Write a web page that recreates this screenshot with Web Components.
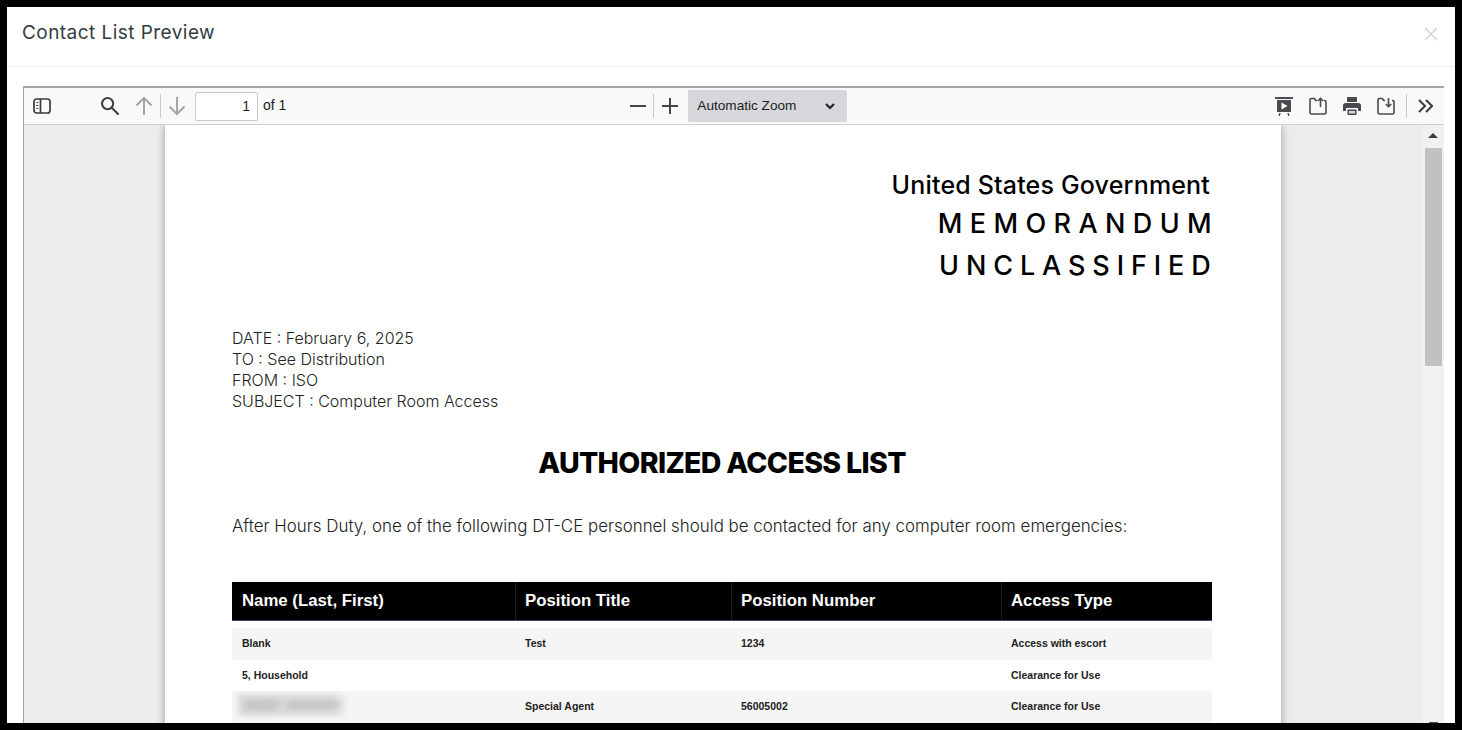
<!DOCTYPE html>
<html>
<head>
<meta charset="utf-8">
<title>Contact List Preview</title>
<style>
  html, body { margin: 0; height: 100%; background: #000; overflow: hidden; }
  body { padding: 7px; box-sizing: border-box; height: 730px; }
</style>
</head>
<body>
<modal-dialog heading="Contact List Preview">
  <pdf-viewer>
    <memo-page></memo-page>
  </pdf-viewer>
</modal-dialog>

<script>
class ModalDialog extends HTMLElement {
  constructor() {
    super();
    this.attachShadow({ mode: 'open' });
  }

  connectedCallback() {
    this.shadowRoot.innerHTML = `
      <style>
        :host {
          display: flex;
          flex-direction: column;
          height: 716px;
          background: #fff;
          overflow: hidden;
          font-family: Inter, "Liberation Sans", sans-serif;
        }
        header {
          flex: none;
          display: flex;
          align-items: center;
          justify-content: space-between;
          height: 59px;
          padding: 0 17px 0 15px;
          border-bottom: 1px solid #eeeef4;
        }
        h1 {
          margin: 0 0 8px;
          font-size: 19px;
          font-weight: 400;
          letter-spacing: 0.45px;
          color: #333d3f;
        }
        .close { display: block; margin-bottom: 6px; }
        .body {
          flex: 1;
          min-height: 0;
          padding: 19px 11px 0 16px;
        }
      </style>
      <header>
        <h1>${this.getAttribute('heading')}</h1>
        <svg class="close" width="14" height="14" viewBox="0 0 14 14" fill="none" stroke="#d4d4d4" stroke-width="1.7"><path d="M1 1l12 12M13 1L1 13"/></svg>
      </header>
      <div class="body"><slot></slot></div>
    `;
  }
}

class PdfToolbar extends HTMLElement {
  constructor() {
    super();
    this.attachShadow({ mode: 'open' });
  }

  connectedCallback() {
    this.shadowRoot.innerHTML = `
      <style>
        :host {
          display: flex;
          align-items: center;
          flex: none;
          height: 36px;
          background: #f9f9fa;
          border-bottom: 1px solid #cfcfd2;
          font: 14px "Liberation Sans", Arial, sans-serif;
          color: #1c1b22;
        }
        svg { display: block; flex: none; }
        .sep { width: 1px; height: 24px; background: #c8c8ca; flex: none; }
        .page {
          box-sizing: border-box;
          width: 63px;
          height: 29px;
          margin-left: 9px;
          padding: 0 7px;
          border: 1px solid #c9c9cc;
          border-radius: 2px;
          background: #fff;
          line-height: 26px;
          text-align: right;
        }
        .of { margin-left: 5px; margin-top: -2px; }
        .zoom {
          display: flex;
          align-items: center;
          justify-content: space-between;
          box-sizing: border-box;
          width: 159px;
          height: 32px;
          margin-left: 10px;
          padding: 0 12px 0 9px;
          background: #d7d7db;
          border-radius: 2px;
          font-size: 13.6px;
        }
        .zoom span { margin-top: -2px; }
      </style>
      <svg style="margin-left:9px" width="18" height="16" viewBox="0 0 18 16" fill="none" stroke="#3a3a3f" stroke-width="1.7"><rect x="1" y="1" width="16" height="14" rx="2.5"/><path d="M7.500 1v14"/><path d="M3.300 4.500h2M3.300 7.500h2M3.300 10.500h2" stroke-width="1.2"/></svg>
      <svg style="margin-left:49px" width="20" height="20" viewBox="0 0 20 20" fill="none" stroke="#3f3f44" stroke-width="2.1"><circle cx="7.600" cy="7.600" r="5.600"/><path d="M11.700 11.700l6.300 6.300" stroke-linecap="round"/></svg>
      <svg style="margin-left:15px" width="18" height="20" viewBox="0 0 18 20" fill="none" stroke="#a6a6a9" stroke-width="2"><path d="M9 19V2M1.500 9.500L9 2l7.500 7.500"/></svg>
      <div class="sep" style="margin-left:7px"></div>
      <svg style="margin-left:7px" width="18" height="20" viewBox="0 0 18 20" fill="none" stroke="#a6a6a9" stroke-width="2"><path d="M9 1v17M1.500 10.500L9 18l7.500-7.500"/></svg>
      <div class="page">1</div>
      <div class="of">of 1</div>
      <svg style="margin-left:344px" width="16" height="2" viewBox="0 0 16 2"><rect width="16" height="2" fill="#45454a"/></svg>
      <div class="sep" style="margin-left:7px"></div>
      <svg style="margin-left:8px" width="16" height="16" viewBox="0 0 16 16"><path d="M7 0h2v7h7v2H9v7H7V9H0V7h7z" fill="#45454a"/></svg>
      <div class="zoom">
        <span>Automatic Zoom</span>
        <svg width="10" height="7" viewBox="0 0 10 7" fill="none" stroke="#222" stroke-width="2.200"><path d="M1 1l4 4 4-4"/></svg>
      </div>
      <svg style="margin-left:428px" width="18" height="19" viewBox="0 0 18 19"><path d="M0 0h18v2H0zM2 3h14v12H2z" fill="#4a4a4f"/><path d="M6.500 5.500v7l6-3.500z" fill="#fff"/><path d="M5 16l-1 3M13 16l1 3" stroke="#4a4a4f" stroke-width="1.400"/></svg>
      <svg style="margin-left:16px" width="18" height="18" viewBox="0 0 18 18" fill="none" stroke="#4a4a4f" stroke-width="1.600"><path d="M8 3.500H6.800L5.300 1.500H2.500A1.500 1.500 0 0 0 1 3v12.500A1.500 1.500 0 0 0 2.500 17h13a1.500 1.500 0 0 0 1.500-1.500V5a1.500 1.500 0 0 0-1.500-1.500H15"/><path d="M11.500 10V1.500M8.800 4l2.700-2.700L14.200 4"/></svg>
      <svg style="margin-left:16px" width="18" height="18" viewBox="0 0 18 18"><path d="M4 0h10v5H4zM2.500 6h13A2.500 2.500 0 0 1 18 8.500V14h-3v-3H3v3H0V8.500A2.500 2.500 0 0 1 2.500 6zM4.500 12.500h9V18h-9z" fill="#4a4a4f"/><path d="M6 14h6v2.500H6z" fill="#d8d8da"/></svg>
      <svg style="margin-left:16px" width="18" height="18" viewBox="0 0 18 18" fill="none" stroke="#4a4a4f" stroke-width="1.600"><path d="M8 3.500H6.800L5.300 1.500H2.500A1.500 1.500 0 0 0 1 3v12.500A1.500 1.500 0 0 0 2.500 17h13a1.500 1.500 0 0 0 1.500-1.500V5a1.500 1.500 0 0 0-1.500-1.500H15"/><path d="M11.500 1v8.500M8.800 7l2.700 2.700L14.200 7"/></svg>
      <div class="sep" style="margin-left:11px"></div>
      <svg style="margin-left:11px" width="15" height="14" viewBox="0 0 15 14" fill="none" stroke="#3a3a3f" stroke-width="2"><path d="M1 1l6 6-6 6M8 1l6 6-6 6"/></svg>
    `;
  }
}

class PdfViewer extends HTMLElement {
  constructor() {
    super();
    this.attachShadow({ mode: 'open' });
  }

  connectedCallback() {
    this.shadowRoot.innerHTML = `
      <style>
        :host {
          display: flex;
          flex-direction: column;
          box-sizing: border-box;
          height: 100%;
          border: 1px solid #a3a3a3;
          border-top-width: 2px;
          border-bottom: 0;
          border-right: 0;
          overflow: hidden;
        }
        .main { flex: 1; min-height: 0; display: flex; }
        .canvas {
          flex: 1;
          min-width: 0;
          display: flex;
          justify-content: center;
          background: #ececee;
          overflow: hidden;
        }
        .scroll {
          flex: none;
          width: 22px;
          display: flex;
          flex-direction: column;
          align-items: center;
          background: #f1f1f1;
        }
        .up {
          flex: none;
          width: 0;
          height: 0;
          margin: 8px 0 10px;
          border: 5px solid transparent;
          border-top: 0;
          border-bottom: 5px solid #3c3c3c;
        }
        .thumb { flex: none; width: 17px; height: 218px; background: #c1c1c1; }
        .down { flex: none; width: 9px; height: 1px; margin-top: auto; background: #505050; }
      </style>
      <pdf-toolbar></pdf-toolbar>
      <div class="main">
        <div class="canvas"><slot></slot></div>
        <div class="scroll"><div class="up"></div><div class="thumb"></div><div class="down"></div></div>
      </div>
    `;
  }
}

class MemoPage extends HTMLElement {
  constructor() {
    super();
    this.attachShadow({ mode: 'open' });
    this.rows = [
      ['Blank', 'Test', '1234', 'Access with escort'],
      ['5, Household', '', '', 'Clearance for Use'],
      ['', 'Special Agent', '56005002', 'Clearance for Use']
    ];
  }

  connectedCallback() {
    const rows = this.rows.map((r, i) => `
      <div class="row ${i % 2 ? '' : 'alt'}">
        ${r.map(c => `<div class="cell">${c}</div>`).join('')}
        ${i === 2 ? '<div class="blur"><i></i><i></i></div>' : ''}
      </div>`).join('');

    this.shadowRoot.innerHTML = `
      <style>
        :host {
          display: block;
          box-sizing: border-box;
          flex: none;
          width: 1116px;
          height: 800px;
          padding: 44px 69px 0 67px;
          background: #fff;
          box-shadow: 0 0 8px rgba(0, 0, 0, 0.35);
          font-family: Inter, "Liberation Sans", sans-serif;
          color: #000;
        }
        .head { text-align: right; font-weight: 500; }
        .gov { font-size: 25px; line-height: 32px; letter-spacing: 0.17px; padding-right: 2px; }
        .cap { font-size: 27px; line-height: 42px; letter-spacing: 7.4px; margin-right: -7.1px; margin-top: 2px; }
        .cap + .cap { letter-spacing: 6.9px; margin-right: -5.6px; margin-top: 0; }
        .meta { margin-top: 41px; font-size: 16px; line-height: 21.1px; font-weight: 300; color: #222; }
        h2 { margin: 31px 0 0; font-size: 28.5px; line-height: 40px; font-weight: 800; letter-spacing: -0.65px; text-align: center; }
        p { margin: 31px 0 0; font-size: 16.9px; line-height: 24px; font-weight: 300; color: #222; }
        .table { margin-top: 44px; font-family: "Liberation Sans", Arial, sans-serif; }
        .th, .row { display: grid; grid-template-columns: 283px 216px 270px 1fr; position: relative; }
        .th {
          height: 38px;
          align-items: center;
          margin-bottom: 7px;
          background: #000;
          border-bottom: 1px solid #3a4468;
          color: #fff;
          font-size: 16.8px;
          font-weight: 700;
        }
        .th div { padding-left: 9px; height: 100%; line-height: 37px; border-left: 1px solid #1c1c1c; }
        .th div:first-child { border-left: 0; padding-left: 10px; }
        .row { height: 31.5px; align-items: center; font-size: 10.5px; font-weight: 700; color: #222; }
        .row.alt { background: #f5f5f5; }
        .cell { padding: 0 0 2px 10px; }
        .blur {
          position: absolute;
          left: 6px;
          top: 3px;
          width: 110px;
          height: 22px;
          display: flex;
          align-items: center;
          gap: 6px;
          padding-left: 6px;
          box-sizing: border-box;
          background: linear-gradient(90deg, #dcdcdc, #e2e2e2 85%, #f2f2f2);
          filter: blur(2px);
        }
        .blur i { display: block; height: 10px; background: #c2c2c2; filter: blur(3px); }
        .blur i:first-child { width: 36px; }
        .blur i:last-child { width: 54px; }
      </style>
      <div class="head">
        <div class="gov">United States Government</div>
        <div class="cap">MEMORANDUM</div>
        <div class="cap">UNCLASSIFIED</div>
      </div>
      <div class="meta">
        <div>DATE : February 6, 2025</div>
        <div>TO : See Distribution</div>
        <div>FROM : ISO</div>
        <div>SUBJECT : Computer Room Access</div>
      </div>
      <h2>AUTHORIZED ACCESS LIST</h2>
      <p>After Hours Duty, one of the following DT-CE personnel should be contacted for any computer room emergencies:</p>
      <div class="table">
        <div class="th">
          <div>Name (Last, First)</div>
          <div>Position Title</div>
          <div>Position Number</div>
          <div>Access Type</div>
        </div>
        ${rows}
      </div>
    `;
  }
}

customElements.define('modal-dialog', ModalDialog);
customElements.define('pdf-toolbar', PdfToolbar);
customElements.define('pdf-viewer', PdfViewer);
customElements.define('memo-page', MemoPage);
</script>
</body>
</html>
